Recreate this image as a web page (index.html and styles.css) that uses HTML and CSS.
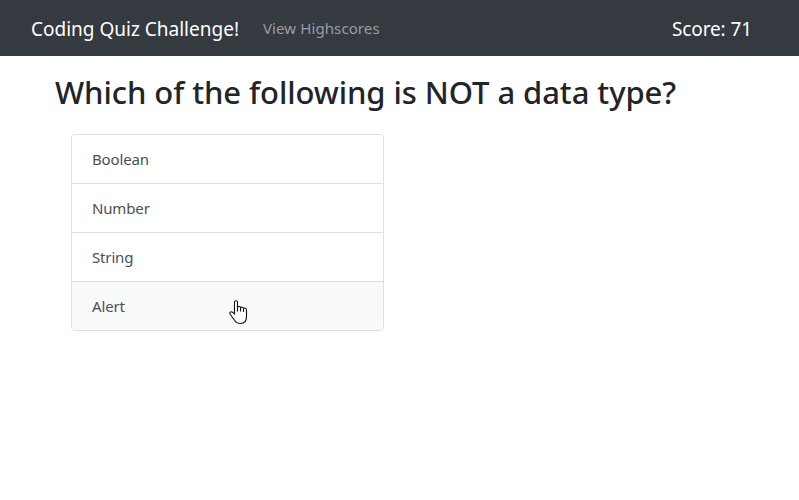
FILE: index.html
```html
<!DOCTYPE html>
<html lang="en">
<head>
<meta charset="utf-8">
<title>Coding Quiz Challenge!</title>
<link rel="stylesheet" href="styles.css">
</head>
<body>
<nav class="navbar">
  <a class="brand">Coding Quiz Challenge!</a>
  <a class="link">View Highscores</a>
  <span class="score">Score: 71</span>
</nav>
<main class="container">
  <h2 class="question">Which of the following is NOT a data type?</h2>
  <div class="list">
    <button class="item">Boolean</button>
    <button class="item">Number</button>
    <button class="item">String</button>
    <button class="item active">Alert</button>
  </div>
</main>
<svg class="cursor" width="19" height="25" viewBox="0 0 19 25"><path d="M5.5 14.5V2.3C5.5 .2 8.5 .2 8.5 2.3V7C9.3 6.1 11.3 6.3 11.5 7.5C12.3 6.8 14.2 7.1 14.5 8.4C15.8 7.6 17.5 8.3 17.5 10V16.5C17.5 20.8 15.2 23.5 11.5 23.5C8.5 23.5 6.7 22.2 5.3 20L1.2 14.3C.1 12.6 2 11 3.5 12.2L5.5 14.2M8.5 7V11.5M11.5 7.5V11.5M14.5 8.4V12"/></svg>
</body>
</html>
```
FILE: styles.css
```css
* { box-sizing: border-box; }
body { margin: 0; background: #fff; color: #212529; font: 16px/24px "Noto Sans", sans-serif; }
.navbar { height: 56px; background: #343a40; display: flex; align-items: center; padding: 0 47px 0 31px; white-space: nowrap; }
.brand { color: #fff; font-size: 19px; line-height: 30px; width: 232px; padding-top: 2px; }
.link { color: #9a9da0; font-size: 15px; letter-spacing: 0.1px; }
.score { color: #fff; font-size: 19px; margin-left: auto; padding-top: 2px; letter-spacing: -0.1px; }
.container { padding: 0 55px; }
.question { margin: 17px 0 23px; font-size: 31px; line-height: 38px; font-weight: 500; letter-spacing: -0.07px; white-space: nowrap; }
.list { width: 313px; margin-left: 16px; border: 1px solid #dfdfdf; border-radius: 4px; overflow: hidden; }
.item { display: block; width: 100%; height: 49px; padding: 0 20px; border: 0; border-bottom: 1px solid #dfdfdf; background: #fff; color: #495057; font: 15px/24px "Noto Sans", sans-serif; letter-spacing: -0.15px; text-align: left; }
.item:last-child { height: 48px; border-bottom: 0; }
.active { background: #f8f9fa; }
.cursor { position: absolute; left: 229px; top: 300px; fill: #fff; stroke: #111; stroke-width: 1.1; }
```
